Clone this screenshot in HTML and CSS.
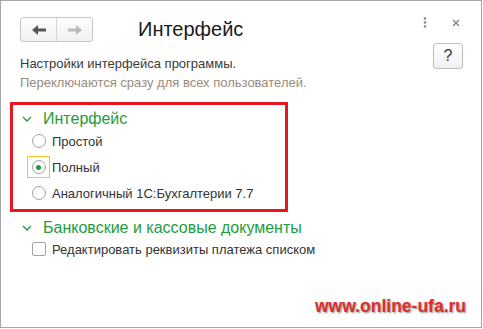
FILE: index.html
```html
<!DOCTYPE html>
<html>
<head>
    <meta charset="utf-8" />
    <title>Интерфейс</title>
    <link rel="stylesheet" href="styles.css">
</head>
<body>
    <div class="window">
        <div class="header">
            <div class="nav">
                <button class="nav-btn">
                    <svg width="14" height="10" viewBox="0 0 14 10"><path d="M0 5 L6 0 L6 3.5 L14 3.5 L14 6.5 L6 6.5 L6 10 Z" fill="#555"/></svg>
                </button>
                <button class="nav-btn">
                    <svg width="14" height="10" viewBox="0 0 14 10"><path d="M14 5 L8 0 L8 3.5 L0 3.5 L0 6.5 L8 6.5 L8 10 Z" fill="#bbb"/></svg>
                </button>
            </div>
            <h1 class="title">Интерфейс</h1>
            <svg class="more" width="4" height="11" viewBox="0 0 4 11">
                <circle cx="2" cy="1.5" r="1.3" fill="#888"/>
                <circle cx="2" cy="5.5" r="1.3" fill="#888"/>
                <circle cx="2" cy="9.5" r="1.3" fill="#888"/>
            </svg>
            <svg class="close" width="8" height="8" viewBox="0 0 8 8">
                <path d="M1 1 L7 7 M7 1 L1 7" stroke="#777" stroke-width="1.1"/>
            </svg>
        </div>

        <div class="intro">
            <div class="desc">
                <p class="desc-main">Настройки интерфейса программы.</p>
                <p class="desc-note">Переключаются сразу для всех пользователей.</p>
            </div>
            <button class="help">?</button>
        </div>

        <div class="group highlighted">
            <div class="group-title">
                <svg class="chevron" width="10" height="6" viewBox="0 0 10 6"><path d="M1 1 L5 5 L9 1" fill="none" stroke="#1f9c3c" stroke-width="1.3"/></svg>
                Интерфейс
            </div>
            <label class="option">
                <span class="radio-wrap"><span class="radio"></span></span>
                Простой
            </label>
            <label class="option">
                <span class="radio-wrap focused"><span class="radio checked"></span></span>
                Полный
            </label>
            <label class="option">
                <span class="radio-wrap"><span class="radio"></span></span>
                Аналогичный 1С:Бухгалтерии 7.7
            </label>
        </div>

        <div class="group bank">
            <div class="group-title">
                <svg class="chevron" width="10" height="6" viewBox="0 0 10 6"><path d="M1 1 L5 5 L9 1" fill="none" stroke="#1f9c3c" stroke-width="1.3"/></svg>
                Банковские и кассовые документы
            </div>
            <label class="option check-option">
                <span class="checkbox"></span>
                Редактировать реквизиты платежа списком
            </label>
        </div>

        <div class="watermark">www.online-ufa.ru</div>
    </div>
</body>
</html>
```

FILE: styles.css
```css
body {
    margin: 0;
    font-family: "Liberation Sans", Arial, sans-serif;
    color: #333;
}

.window {
    position: relative;
    width: 482px;
    height: 328px;
    box-sizing: border-box;
    border: 1px solid #a6a6a6;
    background: #fff;
}

/* Header: navigation, title, window controls */
.header {
    display: flex;
    align-items: flex-start;
    padding: 16px 0 0 19px;
    height: 25px;
}

.nav {
    display: flex;
    width: 73px;
    height: 25px;
    box-sizing: border-box;
    border: 1px solid #c6c6c6;
    border-radius: 3px;
    background: linear-gradient(#ffffff, #f0f0f0);
}

.nav-btn {
    flex: 1;
    display: flex;
    align-items: center;
    justify-content: center;
    border: 0;
    padding: 0;
    background: transparent;
}

.nav-btn + .nav-btn {
    border-left: 1px solid #d6d6d6;
}

.title {
    margin: 0 0 0 45px;
    font-size: 20px;
    font-weight: normal;
    line-height: 25px;
    color: #1a1a1a;
}

.more {
    margin: 0 0 0 auto;
}

.close {
    margin: 2px 21px 0 25px;
}

/* Description and help button */
.intro {
    display: flex;
    justify-content: space-between;
    align-items: flex-start;
    margin-top: 1px;
    padding-left: 19px;
}

.desc {
    margin-top: 11px;
    font-size: 13px;
    line-height: 19px;
}

.desc p {
    margin: 0;
}

.desc-main {
    color: #3a3a3a;
}

.desc-note {
    color: #978d7c;
}

.help {
    width: 30px;
    height: 26px;
    margin-right: 18px;
    padding: 0;
    border: 1px solid #bdbdbd;
    border-radius: 3px;
    background: linear-gradient(#ffffff, #f1f1f1);
    font: 16px "Liberation Sans", Arial, sans-serif;
    color: #333;
}

/* Groups */
.group-title {
    display: flex;
    align-items: center;
    font-size: 16px;
    line-height: 18px;
    color: #1f9c3c;
}

.chevron {
    margin-right: 11px;
}

.highlighted {
    width: 278px;
    box-sizing: border-box;
    margin: 10px 0 0 9px;
    padding: 5px 0 3px 9px;
    border: 3px solid #e8161e;
}

.option {
    display: flex;
    align-items: center;
    height: 26px;
    font-size: 13px;
}

.radio-wrap {
    display: flex;
    align-items: center;
    justify-content: center;
    width: 23px;
    height: 22px;
    box-sizing: border-box;
    margin: 0 2px 0 5px;
    border: 1px solid transparent;
}

.radio-wrap.focused {
    border-color: #f2c22a;
}

.radio {
    display: flex;
    align-items: center;
    justify-content: center;
    width: 14px;
    height: 14px;
    box-sizing: border-box;
    border: 1px solid #a3a3a3;
    border-radius: 50%;
    background: #fff;
}

.radio.checked::after {
    content: "";
    width: 5px;
    height: 5px;
    border-radius: 50%;
    background: #1a9a3e;
}

.bank {
    margin-top: 7px;
    padding-left: 21px;
}

.check-option {
    height: 24px;
}

.checkbox {
    width: 14px;
    height: 14px;
    box-sizing: border-box;
    margin: 0 6px 0 10px;
    border: 1px solid #a3a3a3;
    border-radius: 2px;
    background: #fff;
}

/* Site watermark laid over the form */
.watermark {
    position: absolute;
    right: 15px;
    bottom: 10px;
    font-size: 17.5px;
    font-weight: bold;
    color: #d9302e;
    text-shadow: 1px 1px 2px #8a8a8a;
}
```
